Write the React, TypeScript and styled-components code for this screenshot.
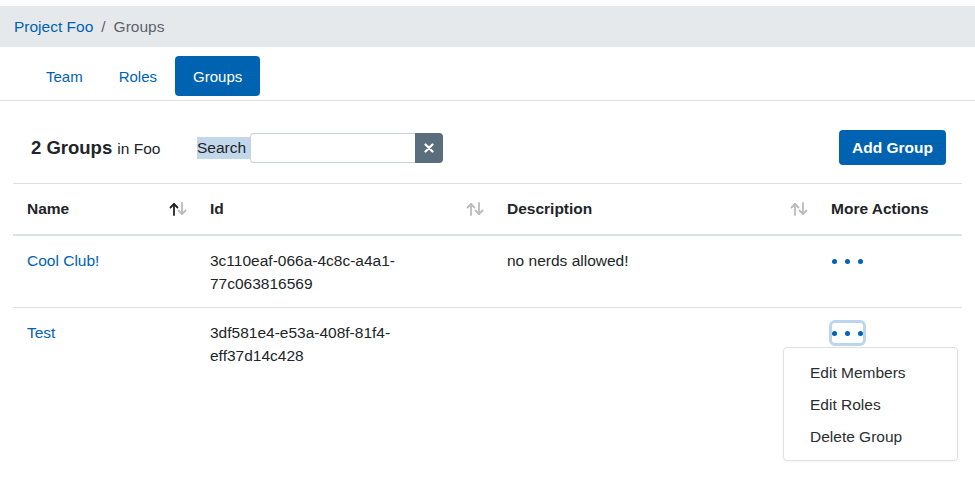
import React from "react";
import styled, { createGlobalStyle } from "styled-components";

const Global = createGlobalStyle`
  html, body { margin: 0; padding: 0; background: #fff; }
  body { font-family: "Liberation Sans", Arial, sans-serif; color: #212529; }
  * { box-sizing: border-box; }
`;

const BLUE = "#0063b1";

const Page = styled.div`
  padding-top: 6px;
  width: 975px;
  min-height: 481px;
`;

const Breadcrumb = styled.nav`
  height: 41px;
  background: #e6e9ec;
  display: flex;
  align-items: center;
  padding-left: 14px;
  font-size: 15.5px;
  color: #5c6369;
  gap: 8px;
`;

const Crumb = styled.a`
  color: ${BLUE};
  text-decoration: none;
`;

const Tabs = styled.div`
  display: flex;
  padding: 9px 0 4px 28px;
  border-bottom: 1px solid #dde1e4;
`;

const Tab = styled.a<{ $active?: boolean }>`
  height: 40px;
  padding: 1px 18px 0;
  display: flex;
  align-items: center;
  font-size: 15px;
  border-radius: 4px;
  text-decoration: none;
  color: ${(p) => (p.$active ? "#fff" : BLUE)};
  background: ${(p) => (p.$active ? BLUE : "transparent")};
`;

const Content = styled.div`
  padding: 0 13px;
`;

const Toolbar = styled.div`
  height: 83px;
  display: flex;
  align-items: center;
  padding: 11px 16px 0 18px;
  border-bottom: 1px solid #dde1e4;
`;

const Title = styled.div`
  font-size: 18.5px;
  font-weight: 700;
  width: 166px;
  span { font-weight: 400; font-size: 15.5px; }
`;

const SearchGroup = styled.div`
  display: flex;
  align-items: center;
`;

const SearchLabel = styled.label`
  font-size: 15.5px;
  background: #c3d7eb;
  padding: 3px 4px 3px 0;
  line-height: 16px;
`;

const SearchInput = styled.input`
  width: 165px;
  height: 30px;
  border: 1px solid #ccd1d5;
  border-right: none;
  border-radius: 4px 0 0 4px;
  font-size: 15px;
  padding: 0 8px;
  outline: none;
`;

const ClearButton = styled.button`
  width: 28px;
  height: 30px;
  border: none;
  border-radius: 0 4px 4px 0;
  background: #5a6e7d;
  display: flex;
  align-items: center;
  justify-content: center;
  padding: 0;
`;

const Spacer = styled.div`
  flex: 1;
`;

const PrimaryButton = styled.button`
  height: 35px;
  padding: 0 13px;
  border: none;
  border-radius: 4px;
  background: ${BLUE};
  color: #fff;
  font-family: inherit;
  font-size: 15.5px;
  font-weight: 700;
`;

const Table = styled.table`
  width: 100%;
  border-collapse: collapse;
  font-size: 15.5px;
`;

const Th = styled.th<{ $w: number }>`
  width: ${(p) => p.$w}px;
  height: 51px;
  text-align: left;
  padding: 0 9px 0 14px;
  font-weight: 700;
  border-bottom: 2px solid #dde1e4;
`;

const ThInner = styled.div`
  display: flex;
  align-items: center;
  justify-content: space-between;
`;

const Td = styled.td`
  vertical-align: top;
  padding: 13px 13px 12px 14px;
  line-height: 23px;
  border-bottom: 1px solid #dde1e4;
  position: relative;
`;

const Tr = styled.tr<{ $last?: boolean }>`
  ${(p) => (p.$last ? "td { border-bottom: none; }" : "")}
`;

const NameLink = styled.a`
  color: ${BLUE};
  text-decoration: none;
`;

const DotsButton = styled.button<{ $focus?: boolean }>`
  display: flex;
  gap: 8px;
  align-items: center;
  padding: 0;
  height: 26px;
  margin: -1px 0 0 -2px;
  background: transparent;
  border: 3px solid ${(p) => (p.$focus ? "#bcd6ee" : "transparent")};
  border-radius: 6px;
`;

const Dot = styled.span`
  width: 5px;
  height: 5px;
  border-radius: 50%;
  background: ${BLUE};
`;

const Menu = styled.div`
  position: absolute;
  top: 39px;
  right: 4px;
  width: 175px;
  background: #fff;
  border: 1px solid #dde1e4;
  border-radius: 4px;
  padding: 8px 0;
  box-shadow: 0 1px 3px rgba(0, 0, 0, 0.05);
  z-index: 2;
`;

const MenuItem = styled.div`
  height: 32px;
  display: flex;
  align-items: center;
  padding-left: 26px;
  font-size: 15.5px;
  color: #2a2e33;
`;

const SortIcon = ({ active }: { active?: boolean }) => (
  <svg width="18" height="14" viewBox="0 0 18 14">
    <g fill="none" strokeWidth="1.8" strokeLinecap="round" strokeLinejoin="round">
      <g stroke={active ? "#222" : "#bbb"}>
        <path d="M5 13V2" />
        <path d="M1.5 5.5L5 2l3.5 3.5" />
      </g>
      <g stroke="#bbb">
        <path d="M13 1v11" />
        <path d="M9.5 8.5L13 12l3.5-3.5" />
      </g>
    </g>
  </svg>
);

const Dots = ({ focus }: { focus?: boolean }) => (
  <DotsButton $focus={focus}>
    <Dot />
    <Dot />
    <Dot />
  </DotsButton>
);

export default function App() {
  return (
    <Page>
      <Global />
      <Breadcrumb>
        <Crumb href="#">Project Foo</Crumb>
        <span>/</span>
        <span>Groups</span>
      </Breadcrumb>
      <Tabs>
        <Tab href="#">Team</Tab>
        <Tab href="#">Roles</Tab>
        <Tab href="#" $active>
          Groups
        </Tab>
      </Tabs>
      <Content>
        <Toolbar>
          <Title>
            2 Groups <span>in Foo</span>
          </Title>
          <SearchGroup>
            <SearchLabel>Search</SearchLabel>
            <SearchInput />
            <ClearButton>
              <svg width="10" height="10" viewBox="0 0 10 10">
                <path d="M1.5 1.5l7 7M8.5 1.5l-7 7" stroke="#fff" strokeWidth="2.2" strokeLinecap="round" />
              </svg>
            </ClearButton>
          </SearchGroup>
          <Spacer />
          <PrimaryButton>Add Group</PrimaryButton>
        </Toolbar>
        <Table>
          <thead>
            <tr>
              <Th $w={183}>
                <ThInner>
                  Name <SortIcon active />
                </ThInner>
              </Th>
              <Th $w={297}>
                <ThInner>
                  Id <SortIcon />
                </ThInner>
              </Th>
              <Th $w={324}>
                <ThInner>
                  Description <SortIcon />
                </ThInner>
              </Th>
              <Th $w={145}>More Actions</Th>
            </tr>
          </thead>
          <tbody>
            <Tr>
              <Td>
                <NameLink href="#">Cool Club!</NameLink>
              </Td>
              <Td>
                3c110eaf-066a-4c8c-a4a1-
                <br />
                77c063816569
              </Td>
              <Td>no nerds allowed!</Td>
              <Td>
                <Dots />
              </Td>
            </Tr>
            <Tr $last>
              <Td>
                <NameLink href="#">Test</NameLink>
              </Td>
              <Td>
                3df581e4-e53a-408f-81f4-
                <br />
                eff37d14c428
              </Td>
              <Td></Td>
              <Td>
                <Dots focus />
                <Menu>
                  <MenuItem>Edit Members</MenuItem>
                  <MenuItem>Edit Roles</MenuItem>
                  <MenuItem>Delete Group</MenuItem>
                </Menu>
              </Td>
            </Tr>
          </tbody>
        </Table>
      </Content>
    </Page>
  );
}
